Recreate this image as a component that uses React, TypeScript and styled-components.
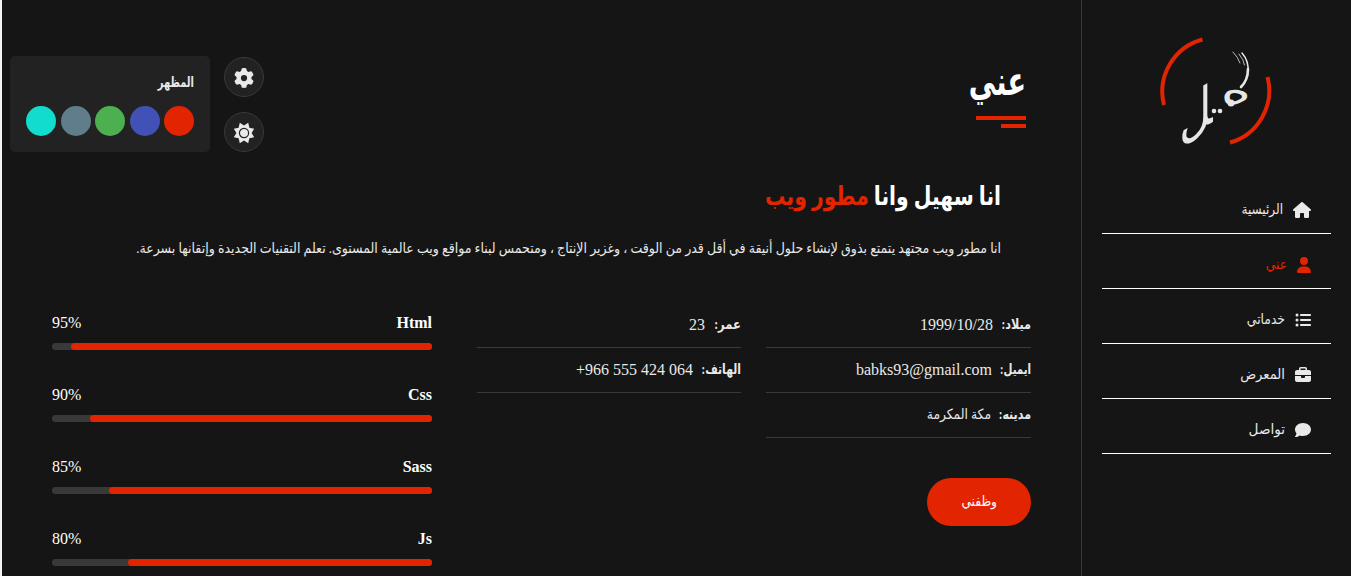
import React from "react";
import styled, { createGlobalStyle } from "styled-components";
import { FaHouse, FaUser, FaListUl, FaBriefcase, FaComment, FaGear } from "react-icons/fa6";

const accent = "#e22400";

const GlobalStyle = createGlobalStyle`
  * { box-sizing: border-box; margin: 0; padding: 0; }
  html, body { background: #151515; overflow: hidden; }
  body { font-family: "Liberation Serif", "DejaVu Sans", serif; font-size: 16px; color: #fff; }
`;

const Page = styled.div`
  display: flex;
  height: 576px;
  overflow: hidden;
  border-left: 2px solid #f4f4f4;
  background: #151515;
`;

const Sidebar = styled.aside`
  width: 270px;
  flex: none;
  border-left: 1px solid #393939;
  padding: 30px 20px 0;
`;

const Logo = styled.svg`
  display: block;
  overflow: visible;
  width: 130px;
  height: 120px;
  margin: 0 51px 29px auto;
`;

const NavItem = styled.a<{ $active?: boolean }>`
  display: flex;
  align-items: center;
  gap: 10px;
  height: 55px;
  padding: 7px 20px 0;
  border-bottom: 1px solid #fff;
  color: ${(p) => (p.$active ? accent : "#e9e9e9")};
  svg { flex: none; height: 16px; }
`;

/* Arabic run: $w is the width it takes in the line, $squeeze narrows the glyphs to it. */
const Ar = styled.span<{ $size: number; $w: number; $bold?: boolean; $squeeze: number }>`
  display: inline-block;
  width: ${(p) => p.$w}px;
  font-size: ${(p) => p.$size}px;
  font-weight: ${(p) => (p.$bold ? 700 : 400)};
  line-height: 20px;
  white-space: nowrap;
  text-align: right;
  transform-origin: right center;
  transform: scaleX(${(p) => p.$squeeze});
`;

const Main = styled.main`
  flex: 1;
  min-width: 0;
  padding: 56px 50px 0 8px;
`;

const Top = styled.header`
  display: flex;
  justify-content: space-between;
  height: 120px;
`;

const Heading = styled.h1`
  display: flex;
  flex-direction: column;
  gap: 4px;
  padding: 16px 5px 0 0;
`;

const Bar = styled.span<{ $w: number; $top?: number }>`
  width: ${(p) => p.$w}px;
  height: 4px;
  margin-top: ${(p) => p.$top ?? 0}px;
  background: ${accent};
`;

const Switcher = styled.div`
  display: flex;
  gap: 14px;
`;

const RoundButtons = styled.div`
  display: flex;
  flex-direction: column;
  gap: 15px;
  padding-top: 1px;
`;

const RoundButton = styled.button`
  display: grid;
  place-items: center;
  width: 40px;
  height: 40px;
  padding-top: 1px;
  border: 1px solid #393939;
  border-radius: 50%;
  background: #222;
  color: #e9e9e9;
`;

const Palette = styled.section`
  width: 200px;
  height: 96px;
  padding: 16px;
  border-radius: 5px;
  background: #222;
  color: #e9e9e9;
`;

const PaletteTitle = styled.h4`
  height: 34px;
  line-height: 20px;
`;

const Swatches = styled.div`
  display: flex;
  justify-content: space-between;
`;

const Swatch = styled.span<{ $color: string }>`
  width: 30px;
  height: 30px;
  border-radius: 50%;
  background: ${(p) => p.$color};
`;

const Intro = styled.section`
  height: 134px;
  padding-right: 30px;
`;

const Headline = styled.h3`
  height: 62px;
  padding-top: 11px;
  line-height: 24px;
  em { font-style: normal; color: ${accent}; }
`;

const Lead = styled.p`
  color: #e9e9e9;
  line-height: 20px;
`;

const Columns = styled.div`
  display: flex;
  gap: 45px;
`;

const Personal = styled.section`
  width: 554px;
  margin-top: -7px;
`;

const InfoGrid = styled.div`
  display: grid;
  grid-template-columns: 265px 264px;
  column-gap: 25px;
`;

const Info = styled.div`
  display: flex;
  align-items: center;
  height: 45px;
  gap: 9px;
  border-bottom: 1px solid #393939;
  color: #e9e9e9;
  line-height: 20px;
`;

const HireButton = styled.button`
  display: block;
  width: 104px;
  height: 48px;
  margin-top: 40px;
  border: 0;
  border-radius: 24px;
  background: ${accent};
  color: #fff;
  font-family: inherit;
`;

const Skills = styled.section`
  width: 380px;
`;

const Skill = styled.div`
  height: 72px;
`;

const SkillRow = styled.div`
  display: flex;
  justify-content: space-between;
  height: 33px;
  padding-top: 3px;
  line-height: 20px;
`;

const Track = styled.div`
  height: 7px;
  border-radius: 4px;
  background: #393939;
`;

const Fill = styled.div`
  height: 7px;
  border-radius: 4px;
  background: ${accent};
`;

const nav = [
  { label: "الرئيسية", Icon: FaHouse, w: 18, tw: 41, sq: 0.86 },
  { label: "عني", Icon: FaUser, w: 14, tw: 21, sq: 0.88, active: true },
  { label: "خدماتي", Icon: FaListUl, w: 16, tw: 38, sq: 0.88 },
  { label: "المعرض", Icon: FaBriefcase, w: 16, tw: 45, sq: 0.94 },
  { label: "تواصل", Icon: FaComment, w: 16, tw: 36, sq: 0.97 },
];

const skills = [
  { name: "Html", value: 95 },
  { name: "Css", value: 90 },
  { name: "Sass", value: 85 },
  { name: "Js", value: 80 },
];

/* Eight-pointed star, points set off the axes by 22.5 degrees. */
const sunPoints = Array.from({ length: 16 }, (_, i) => {
  const r = i % 2 ? 7.6 : 11;
  const a = ((i + 1) * Math.PI) / 8;
  return `${(11 + r * Math.cos(a)).toFixed(2)},${(11 + r * Math.sin(a)).toFixed(2)}`;
}).join(" ");

function SunIcon() {
  return (
    <svg width="22" height="22" viewBox="0 0 22 22">
      <polygon points={sunPoints} fill="currentColor" />
      <circle cx="11" cy="11" r="4.600" fill="none" stroke="#222" strokeWidth="1.200" />
    </svg>
  );
}

export default function App() {
  return (
    <>
      <GlobalStyle />
      <Page dir="rtl">
        <Sidebar>
          <Logo viewBox="0 0 130 120" direction="ltr">
            <g fill="none" stroke={accent} strokeWidth="4">
              <path d="M52.500 9.500A54 54 0 0 0 14 75" />
              <path d="M117.500 47A54 54 0 0 1 80 112.500" />
            </g>
            <g fill="#e6e6e6" fontFamily="DejaVu Sans">
              <text transform="matrix(.88 -.5 0 1.1 2 22)" x="31" y="95" fontSize="50">ﻞ</text>
              <text transform="translate(72 76) rotate(-12) scale(1.55 1)" fontSize="38">ه</text>
              <circle cx="64" cy="81" r="2.300" />
              <circle cx="70" cy="81" r="2.300" />
              <circle cx="81" cy="73" r="3.500" />
            </g>
            <g fill="none" stroke="#e6e6e6" strokeLinecap="round">
              <path d="M98 39Q98 50 91 57" strokeWidth="2.600" />
              <path d="M92 23Q99 31 98 42" strokeWidth="1.500" />
              <path d="M89 24Q94 30 94.500 35M83 22Q88 27 90 33" strokeWidth=".8" />
            </g>
          </Logo>
          {nav.map(({ label, Icon, w, tw, sq, active }) => (
            <NavItem key={label} $active={active}>
              <Icon style={{ width: w }} />
              <Ar $size={14} $w={tw} $squeeze={sq}>{label}</Ar>
            </NavItem>
          ))}
        </Sidebar>
        <Main>
          <Top>
            <Heading>
              <Ar $size={40} $w={50} $squeeze={0.68} $bold>عني</Ar>
              <Bar $w={50} $top={20} />
              <Bar $w={25} />
            </Heading>
            <Switcher>
              <RoundButtons>
                <RoundButton><FaGear size={20} /></RoundButton>
                <RoundButton><SunIcon /></RoundButton>
              </RoundButtons>
              <Palette>
                <PaletteTitle><Ar $size={14} $w={36} $squeeze={0.71} $bold>المظهر</Ar></PaletteTitle>
                <Swatches>
                  {[accent, "#4151b5", "#4caf50", "#607d8b", "#12dccd"].map((c) => (
                    <Swatch key={c} $color={c} />
                  ))}
                </Swatches>
              </Palette>
            </Switcher>
          </Top>
          <Intro>
            <Headline>
              <Ar $size={26} $w={235} $squeeze={0.782} $bold>انا سهيل وانا <em>مطور ويب</em></Ar>
            </Headline>
            <Lead>
              <Ar $size={14} $w={864} $squeeze={0.897}>
                انا مطور ويب مجتهد يتمتع بذوق لإنشاء حلول أنيقة في أقل قدر من الوقت ، وغزير الإنتاج ، ومتحمس لبناء مواقع ويب عالمية المستوى. تعلم التقنيات الجديدة وإتقانها بسرعة.
              </Ar>
            </Lead>
          </Intro>
          <Columns>
            <Personal>
              <InfoGrid>
                <Info><Ar $size={14} $w={29} $squeeze={0.8} $bold>ميلاد:</Ar><span>1999/10/28</span></Info>
                <Info><Ar $size={14} $w={27} $squeeze={0.83} $bold>عمر:</Ar><span>23</span></Info>
                <Info><Ar $size={14} $w={30} $squeeze={0.73} $bold>ايميل:</Ar><span>babks93@gmail.com</span></Info>
                <Info><Ar $size={14} $w={39} $squeeze={0.77} $bold>الهاتف:</Ar><span dir="ltr">+966 555 424 064</span></Info>
                <Info><Ar $size={14} $w={31} $squeeze={0.79} $bold>مدينه:</Ar><Ar $size={14} $w={64} $squeeze={0.88}>مكة المكرمة</Ar></Info>
              </InfoGrid>
              <HireButton><Ar $size={14} $w={35} $squeeze={0.87}>وظفني</Ar></HireButton>
            </Personal>
            <Skills>
              {skills.map((s) => (
                <Skill key={s.name}>
                  <SkillRow><b>{s.name}</b><span dir="ltr">{s.value}%</span></SkillRow>
                  <Track><Fill style={{ width: `${s.value}%` }} /></Track>
                </Skill>
              ))}
            </Skills>
          </Columns>
        </Main>
      </Page>
    </>
  );
}
